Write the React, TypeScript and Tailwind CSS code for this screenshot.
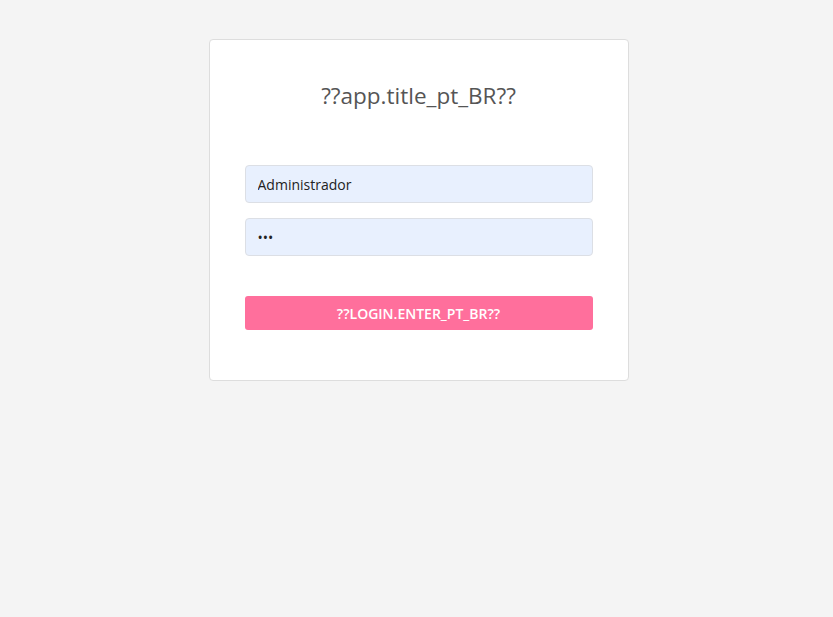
import React from "react";

export default function App() {
  return (
    <div
      className="min-h-[617px] w-full bg-[#f4f4f4] flex justify-center pt-[39px] pl-[4px]"
      style={{ fontFamily: '"Open Sans", "Noto Sans", sans-serif' }}
    >
      <div className="w-[420px] h-[342px] bg-white border border-[#dddddd] rounded-[4px] px-[35px] pt-[38px]">
        <h1 className="text-center text-[22.5px] leading-[36px] text-[#555555] font-normal">
          ??app.title_pt_BR??
        </h1>
        <div className="mt-[51px] flex flex-col gap-[15px]">
          <input
            type="text"
            defaultValue="Administrador"
            className="h-[38px] w-full rounded-[4px] border border-[#dcdfe5] bg-[#e8f0fe] px-[12px] text-[14px] text-[#222] outline-none"
          />
          <input
            type="password"
            defaultValue="abc"
            className="h-[38px] w-full rounded-[4px] border border-[#dcdfe5] bg-[#e8f0fe] px-[12px] text-[14px] text-[#222] outline-none"
          />
        </div>
        <button className="mt-[40px] h-[34px] w-full rounded-[3px] bg-[#ff6f9c] text-white text-[14px] font-semibold">
          ??LOGIN.ENTER_PT_BR??
        </button>
      </div>
    </div>
  );
}
